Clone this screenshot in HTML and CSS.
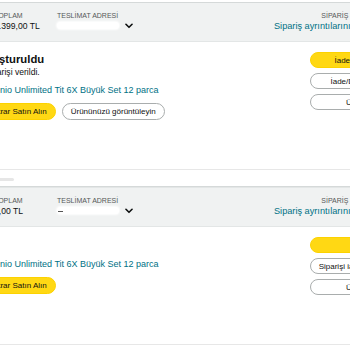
FILE: index.html
```html
<!DOCTYPE html>
<html lang="tr">
<head>
	<meta charset="utf-8">
	<title>Siparişlerim</title>
	<link rel="stylesheet" href="styles.css">
</head>
<body>
	<div class="orders">
		<div class="card">
			<div class="card-head">
				<div class="col col-date">
					<div class="label">SİPARİŞ VERİLDİ</div>
					<div class="value">12 Mart 2023</div>
				</div>
				<div class="col col-total">
					<div class="label">TOPLAM</div>
					<div class="value">1.399,00 TL</div>
				</div>
				<div class="col col-ship">
					<div class="label">TESLİMAT ADRESİ</div>
					<div class="value">
						<span class="blur"></span>
						<svg class="chev" width="8" height="6" viewBox="0 0 10 7"><path d="M1.2 1.3l3.8 3.8 3.8-3.8" fill="none" stroke="#0f1111" stroke-width="2" stroke-linecap="round" stroke-linejoin="round"/></svg>
					</div>
				</div>
				<div class="col col-id">
					<div class="label">SİPARİŞ # 403-7281945-6620319</div>
					<div class="value"><a href="#">Sipariş ayrıntılarını görüntüle</a><i class="sep"></i><a href="#">Fatura</a></div>
				</div>
			</div>
			<div class="card-body">
				<div class="main">
					<div class="status">
						<div class="status-title">Değişim oluşturuldu</div>
						<div class="status-sub">Yeni değişim siparişi verildi.</div>
					</div>
					<div class="item">
						<div class="thumb"></div>
						<div class="item-info">
							<a class="item-name" href="#">Eugenio Unlimited Tit 6X Büyük Set 12 parca</a>
							<div class="item-actions">
								<button class="btn btn-primary">Tekrar Satın Alın</button>
								<button class="btn">Ürününüzü görüntüleyin</button>
							</div>
						</div>
					</div>
				</div>
				<div class="actions">
					<button class="btn btn-primary">İade durumunu izle</button>
					<button class="btn">İade/Değişim durumu</button>
					<button class="btn">Ürünü incele</button>
				</div>
			</div>
			<div class="card-foot"><span class="smudge"></span></div>
		</div>

		<div class="card">
			<div class="card-head">
				<div class="col col-date">
					<div class="label">SİPARİŞ VERİLDİ</div>
					<div class="value">14 Mart 2023</div>
				</div>
				<div class="col col-total">
					<div class="label">TOPLAM</div>
					<div class="value">0,00 TL</div>
				</div>
				<div class="col col-ship">
					<div class="label">TESLİMAT ADRESİ</div>
					<div class="value">
						<span class="blur"><i class="dash"></i></span>
						<svg class="chev" width="8" height="6" viewBox="0 0 10 7"><path d="M1.2 1.3l3.8 3.8 3.8-3.8" fill="none" stroke="#0f1111" stroke-width="2" stroke-linecap="round" stroke-linejoin="round"/></svg>
					</div>
				</div>
				<div class="col col-id">
					<div class="label">SİPARİŞ # 403-1936027-4458312</div>
					<div class="value"><a href="#">Sipariş ayrıntılarını görüntüle</a><i class="sep"></i><a href="#">Fatura</a></div>
				</div>
			</div>
			<div class="card-body">
				<div class="main">
					<div class="item item-late">
						<div class="thumb"></div>
						<div class="item-info">
							<a class="item-name" href="#">Eugenio Unlimited Tit 6X Büyük Set 12 parca</a>
							<div class="item-actions">
								<button class="btn btn-primary">Tekrar Satın Alın</button>
							</div>
						</div>
					</div>
				</div>
				<div class="actions">
					<button class="btn btn-primary">Takip et</button>
					<button class="btn">Siparişi iade et veya değiştir</button>
					<button class="btn">Ürünü incele</button>
				</div>
			</div>
			<div class="card-foot"><span class="smudge"></span></div>
		</div>
	</div>
</body>
</html>
```

FILE: styles.css
```css
*{
	margin: 0;
	padding: 0;
	box-sizing: border-box;
}
html, body{
	overflow: hidden;
	background: #fff;
}
body{
	font-family: "Liberation Sans", Arial, sans-serif;
	color: #0f1111;
}
a{
	color: #007185;
	text-decoration: none;
}

/* the list is wider than the window, its left part is cut */
.orders{
	width: 516px;
	margin-left: -77px;
	padding-top: 2px;
}
.card{
	border: 1px solid #d5d9d9;
	border-radius: 8px;
	overflow: hidden;
}
.card + .card{
	border-top-color: #e3e6e6;
}

.card-head{
	display: flex;
	background: #f0f2f2;
	padding: 8px 11px 9px;
	border-bottom: 1px solid #e3e6e6;
}
.col{
	flex: none;
}
.col-date{ width: 47px; margin-right: 12px; }
.col-total{ width: 51px; margin-right: 12px; }
.col-id{
	margin-left: auto;
	text-align: right;
}
.label{
	font-size: 7px;
	line-height: 9px;
	color: #565959;
	white-space: nowrap;
}
.value{
	font-size: 8.6px;
	line-height: 12px;
	color: #0f1111;
	white-space: nowrap;
	display: flex;
	align-items: center;
}
.col-id .value{
	justify-content: flex-end;
	font-size: 9.2px;
}
.blur{
	display: inline-block;
	position: relative;
	width: 62px;
	height: 7px;
	margin-top: 2px;
	background: #fff;
	border-radius: 4px;
	box-shadow: 0 0 2px 1px rgba(255,255,255,0.9);
}
.dash{
	position: absolute;
	left: 1px;
	top: 4px;
	width: 5px;
	height: 1px;
	background: #555;
}
.chev{
	margin-left: 6px;
	margin-top: 3px;
}
.sep{
	display: inline-block;
	width: 1px;
	height: 9px;
	background: #c7c7c7;
	margin: 0 4px;
}

.card-body{
	display: flex;
	gap: 12px;
	padding: 10px 11px 49px;
}
.main{
	flex: 1;
	min-width: 0;
}
.status-title{
	font-size: 11.3px;
	line-height: 14px;
	font-weight: bold;
}
.status-sub{
	font-size: 8.6px;
	line-height: 12px;
}
.item{
	display: flex;
	gap: 8px;
	margin-top: 6px;
}
.item-late{
	margin-top: 21px;
}
.thumb{
	width: 36px;
	height: 36px;
	background: #f3f3f3;
}
.item-name{
	display: block;
	font-size: 9px;
	line-height: 12px;
	white-space: nowrap;
}
.item-actions{
	display: flex;
	gap: 6px;
	margin-top: 7px;
}

.btn{
	font-family: inherit;
	font-size: 8px;
	height: 16px;
	padding: 0 8px;
	border: 1px solid #a9adad;
	border-radius: 9px;
	background: #fff;
	color: #0f1111;
	white-space: nowrap;
}
.item-actions .btn{
	height: 17px;
}
.btn-primary{
	background: #ffd814;
	border-color: #fcd200;
}
.actions{
	flex: none;
	width: 117px;
	display: flex;
	flex-direction: column;
	gap: 5px;
}
.actions .btn{
	width: 100%;
	padding: 0 4px;
}

.card-foot{
	border-top: 1px solid #e7e7e7;
	padding: 8px 11px 5px;
}
.smudge{
	display: block;
	width: 79px;
	height: 3px;
	border-radius: 2px;
	background: #e6e6e6;
}
```
